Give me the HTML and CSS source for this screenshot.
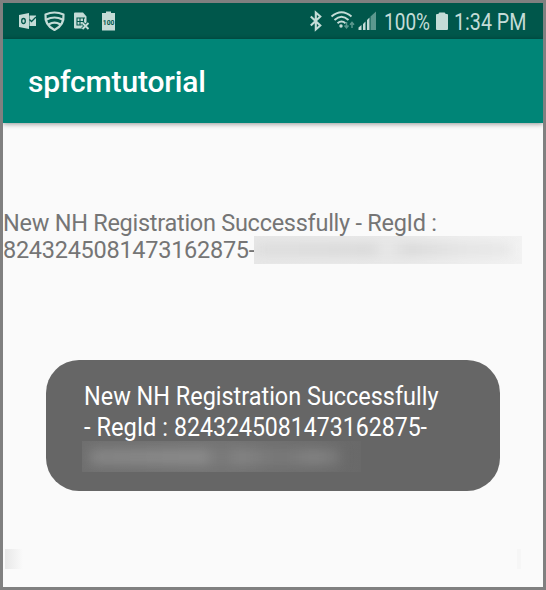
FILE: index.html
```html
<!DOCTYPE html>
<html lang="en">
<head>
<meta charset="utf-8">
<title>spfcmtutorial</title>
<link rel="stylesheet" href="styles.css">
</head>
<body>
<div class="phone">
  <header class="status">
    <svg class="status-art" width="540" height="36" viewBox="3 3 540 36">
      <g fill="#c4dcd7">
        <path d="M19 15l10-2v16l-10-2z"/>
        <path d="M29.500 15.500h6.500v10.500h-6.500z"/>
      </g>
      <path d="M29.500 19.500l2 2 4.500-4.500" fill="none" stroke="#00574b" stroke-width="1.300"/>
      <ellipse cx="23.500" cy="21" rx="1.800" ry="2.500" fill="none" stroke="#00574b" stroke-width="1.300"/>
      <g fill="none" stroke="#c4dcd7" stroke-width="2.200" stroke-linejoin="round" stroke-linecap="round">
        <path d="M45.500 14.500Q54.500 10.500 63.500 14.500Q64.500 25 54.500 30Q44.500 25 45.500 14.500z"/>
        <path d="M46.500 19.500Q54.500 15.500 62.500 19.500M49 24.300Q54.500 21 60 24.300"/>
      </g>
      <path fill="#c4dcd7" d="M74 13.500q0-1 1-1h8l3.500 4v7l-3.500 1v4h-8q-1 0-1-1z"/>
      <path d="M76.500 18h8.500M76.500 21.500h7M76.500 25h5M77 17.500v8M80 17.500v8M83.500 17.500v5" stroke="#00574b" stroke-width="1.100" fill="none"/>
      <path d="M82.500 23l6 6M88.500 23l-6 6" stroke="#00574b" stroke-width="3.500"/>
      <path d="M82.500 23l6 6M88.500 23l-6 6" stroke="#c4dcd7" stroke-width="1.800"/>
      <path fill="#c4dcd7" d="M106 11.500h5v1.500h4v17.500h-13v-17.500h4z"/>
      <text x="102.800" y="25" class="tiny" textLength="11.500" lengthAdjust="spacingAndGlyphs">100</text>
      <path d="M310.800 16.500l9.500 9-4.500 4v-17l4.500 4-9.500 9" fill="none" stroke="#c4dcd7" stroke-width="2.100"/>
      <g fill="none" stroke="#c4dcd7" stroke-width="1.900">
        <path d="M331.500 16.500Q341.500 7.800 351.500 16.500M334.500 20Q341.500 13.500 348.500 20M337.500 23.200Q341.500 19.700 345.500 23.200"/>
      </g>
      <circle cx="341" cy="26" r="1.700" fill="#c4dcd7"/>
      <path d="M346.500 22v5.500M344.500 25.500l2 2.300 2-2.300M352 28v-5.500M350 24.800l2-2.300 2 2.300" fill="none" stroke="#5c988e" stroke-width="1.500"/>
      <path fill="#c4dcd7" d="M358.500 30v-2.500l3-2.500v5zM363 30v-6l2.500-2.500v8.500zM367 30v-10l2.500-2.500v12.500z"/>
      <path fill="#5c988e" d="M370.500 30v-13.500l5.500-5v18.500z"/>
      <text x="384" y="29.800" class="clock" textLength="46" lengthAdjust="spacingAndGlyphs">100%</text>
      <path fill="#c4dcd7" d="M439.500 12.500h5q1 0 1 1.500h1.500q1 0 1 1v14q0 1-1 1h-10q-1 0-1-1v-14q0-1 1-1h1.500q0-1.500 1-1.500z"/>
      <text x="454" y="29.800" class="clock" textLength="72.500" lengthAdjust="spacingAndGlyphs">1:34 PM</text>
    </svg>
  </header>
  <div class="appbar">
    <h1 class="title">spfcmtutorial</h1>
  </div>
  <main class="content">
    <div class="message">
      <p class="line">New NH Registration Successfully - RegId :</p>
      <p class="line row">8243245081473162875-<span class="redacted"><i class="smudge"></i></span></p>
    </div>
    <section class="toast">
      <svg class="toast-text" width="410" height="62" viewBox="0 0 410 62">
        <text x="2" y="25" textLength="354.500" lengthAdjust="spacingAndGlyphs">New NH Registration Successfully</text>
        <text x="2" y="56" textLength="84" lengthAdjust="spacingAndGlyphs">- RegId :</text>
        <text x="92" y="56" textLength="253" lengthAdjust="spacingAndGlyphs">8243245081473162875-</text>
      </svg>
      <div class="toast-redacted"><i class="toast-smudge"></i></div>
    </section>
    <div class="residue"><i class="residue-start"></i><i class="residue-end"></i></div>
  </main>
</div>
</body>
</html>
```
FILE: styles.css
```css
* { box-sizing: border-box; }
body { margin: 0; font-family: Roboto, "Liberation Sans", sans-serif; }
.phone {
  display: flex;
  flex-direction: column;
  width: 546px;
  height: 590px;
  border: 3px solid #808080;
  background: #fafafa;
  overflow: hidden;
}
.status { flex: none; height: 36px; background: #00574b; }
.status-art { display: block; }
.clock { font-size: 23.5px; fill: #c4dcd7; }
.tiny { font-size: 7.5px; font-weight: 700; fill: #00574b; }
.appbar {
  flex: none;
  display: flex;
  align-items: center;
  height: 84px;
  padding: 2px 0 0 25px;
  background: #008577;
  box-shadow: 0 1px 5px rgba(0, 0, 0, .42);
}
.title {
  margin: 0;
  font-size: 30px;
  letter-spacing: -.15px;
  font-weight: 500;
  line-height: 36px;
  color: #fff;
}
.content { display: flex; flex-direction: column; flex: 1; }
.message {
  height: 54px;
  margin-top: 87px;
  font-size: 23.5px;
  letter-spacing: -.27px;
  line-height: 27px;
  color: #757575;
  white-space: nowrap;
}
.line { height: 27px; margin: 0; }
.row { display: flex; align-items: flex-start; }
.redacted {
  width: 268px;
  height: 28px;
  margin: -1px 0 0 -1px;
  overflow: hidden;
  background: linear-gradient(90deg, #e7e7e7, #e9e9e9 55%, #f2f2f2);
}
.smudge {
  display: block;
  width: 255px;
  height: 13px;
  margin: 7px 2px;
  background: linear-gradient(90deg, #dedede, #dadada 45%, #e8e8e8 51%, #dadada 60%, #e4e4e4 80%, #e8e8e8);
  filter: blur(5px);
}
.toast {
  width: 454px;
  height: 131px;
  margin: 96px 0 0 43px;
  padding: 20px 0 0 36px;
  border-radius: 33px;
  background: #666;
}
.toast-text { display: block; font-size: 26px; fill: #fff; }
.toast-redacted {
  width: 279px;
  height: 31px;
  margin-top: -1px;
  overflow: hidden;
  background: linear-gradient(90deg, #6f6f6f, #747474 50%, #696969);
}
.toast-smudge {
  display: block;
  width: 250px;
  height: 16px;
  margin: 8px;
  background: linear-gradient(90deg, #858585, #8c8c8c 45%, #777 52%, #858585 60%, #777 76%, #838383 90%, #777);
  filter: blur(6px);
}
.residue {
  display: flex;
  justify-content: space-between;
  width: 516px;
  height: 20px;
  margin: 58px 0 0 2px;
}
.residue-start { width: 18px; background: linear-gradient(90deg, #e8e8e8, #fafafa); }
.residue-end { width: 4px; background: #f6f6f6; }
```
